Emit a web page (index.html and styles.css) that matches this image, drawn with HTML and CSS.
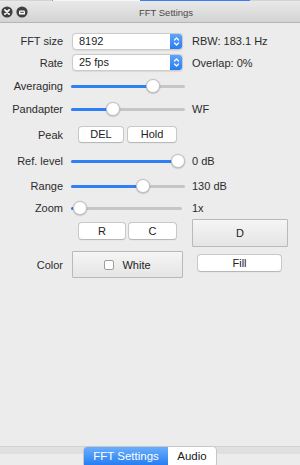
FILE: index.html
```html
<!DOCTYPE html>
<html>
<head>
<meta charset="utf-8">
<link rel="stylesheet" href="styles.css">
</head>
<body>
<div class="window">
  <div class="topstrip"><span class="ts-a"></span><span class="ts-b"></span><span class="ts-c"></span><span class="ts-d"></span></div>
  <div class="titlebar">
    <div class="tb-icons">
      <svg class="tb-icon" width="12" height="12" viewBox="0 0 12 12"><circle cx="6" cy="6" r="5.6" fill="#404040"/><path d="M3.9 3.9 L8.1 8.1 M8.1 3.9 L3.9 8.1" stroke="#fff" stroke-width="1.7" stroke-linecap="round"/></svg>
      <svg class="tb-icon" width="12" height="12" viewBox="0 0 12 12"><circle cx="6" cy="6" r="5.6" fill="#404040"/><rect x="3" y="4.6" width="6" height="4" rx="1.2" fill="#fff"/><rect x="4.2" y="5.8" width="3.6" height="1" fill="#404040"/></svg>
    </div>
    <div class="tb-title">FFT Settings</div>
  </div>

  <div class="panel">
    <div class="lbl">FFT size</div>
    <div class="select"><span class="select-text">8192</span><span class="stepper"><svg width="7" height="11" viewBox="0 0 7 11"><path d="M1.5 4 L3.5 2 L5.5 4 M1.5 7 L3.5 9 L5.5 7" stroke="#fff" stroke-width="1.2" fill="none" stroke-linecap="round" stroke-linejoin="round"/></svg></span></div>
    <div class="val">RBW: 183.1 Hz</div>

    <div class="lbl">Rate</div>
    <div class="select"><span class="select-text">25 fps</span><span class="stepper"><svg width="7" height="11" viewBox="0 0 7 11"><path d="M1.5 4 L3.5 2 L5.5 4 M1.5 7 L3.5 9 L5.5 7" stroke="#fff" stroke-width="1.2" fill="none" stroke-linecap="round" stroke-linejoin="round"/></svg></span></div>
    <div class="val">Overlap: 0%</div>

    <div class="lbl">Averaging</div>
    <div class="slider" style="--v:0.745"><span class="track"></span><span class="fill"></span><span class="knob"></span></div>
    <div class="val"></div>

    <div class="lbl">Pandapter</div>
    <div class="slider" style="--v:0.345"><span class="track"></span><span class="fill"></span><span class="knob"></span></div>
    <div class="val">WF</div>

    <div class="lbl">Peak</div>
    <div class="btn-pair">
      <div class="btn btn-del">DEL</div>
      <div class="btn btn-hold">Hold</div>
    </div>
    <div class="val"></div>

    <div class="lbl">Ref. level</div>
    <div class="slider" style="--v:1"><span class="track"></span><span class="fill"></span><span class="knob"></span></div>
    <div class="val">0 dB</div>

    <div class="lbl">Range</div>
    <div class="slider" style="--v:0.645"><span class="track"></span><span class="fill"></span><span class="knob"></span></div>
    <div class="val">130 dB</div>

    <div class="lbl">Zoom</div>
    <div class="slider slider-short" style="--v:0.02"><span class="track"></span><span class="fill"></span><span class="knob"></span></div>
    <div class="val">1x</div>

    <div class="lbl"></div>
    <div class="btn-pair top3">
      <div class="btn btn-r">R</div>
      <div class="btn btn-c">C</div>
    </div>
    <div class="sq-btn btn-d">D</div>

    <div class="lbl">Color</div>
    <div class="sq-btn btn-color"><span class="check"></span>White</div>
    <div class="btn btn-fill">Fill</div>
  </div>

  <div class="footer">
    <div class="segmented">
      <div class="seg seg-active">FFT Settings</div>
      <div class="seg">Audio</div>
    </div>
  </div>
</div>
</body>
</html>
```

FILE: styles.css
```css
html, body {
  margin: 0;
  padding: 0;
}
body {
  width: 300px;
  height: 465px;
  overflow: hidden;
  background: #ececec;
  font-family: "Liberation Sans", Arial, sans-serif;
  font-size: 11px;
  color: #262626;
}
.window {
  display: flex;
  flex-direction: column;
  height: 465px;
}
.topstrip {
  display: flex;
  height: 1px;
  flex: none;
}
.ts-a { width: 52px; background: #d4d4d4; border-right: 1px solid #9a9a9a; }
.ts-b { width: 87px; background: #f6f6f6; }
.ts-c { width: 110px; background: #3a80f3; }
.ts-d { flex: 1; background: #d4d4d4; }

.titlebar {
  flex: none;
  height: 21px;
  display: flex;
  align-items: center;
  background: linear-gradient(#e9e9e9, #d3d3d3);
  border-bottom: 1px solid #b6b6b6;
}
.tb-icons {
  width: 32px;
  display: flex;
  align-items: center;
  gap: 3px;
  padding-left: 1px;
  box-sizing: border-box;
}
.tb-icon { display: block; }
.tb-title {
  flex: 1;
  text-align: center;
  font-size: 9.5px;
  color: #4a4a4a;
  padding-top: 1px;
}

.panel {
  flex: 1;
  display: grid;
  grid-template-columns: 63px 114px 1fr;
  grid-template-rows: 20px 23px 23px 24px 27px 26px 23px 22px 29px 34px;
  column-gap: 8px;
  align-content: start;
  align-items: center;
  padding-top: 8px;
}
.panel > .val { padding-left: 0; }
.lbl {
  text-align: right;
  color: #2b2b2b;
}
.val {
  color: #2b2b2b;
  margin-left: -1px;
}

.select {
  display: flex;
  width: 111px;
  height: 17px;
  margin-left: 1px;
  box-sizing: border-box;
  border: 1px solid #cbcbcb;
  border-radius: 4px;
  background: #fff;
  overflow: hidden;
  box-shadow: 0 0.5px 1px rgba(0,0,0,0.08);
}
.select-text {
  flex: 1;
  padding-left: 6px;
  line-height: 15px;
  color: #1e1e1e;
}
.stepper {
  width: 12px;
  display: flex;
  align-items: center;
  justify-content: center;
  background: linear-gradient(#5ea5fb, #2a7df2);
}
.stepper svg { display: block; }

.slider {
  position: relative;
  width: 114px;
  height: 16px;
}
.slider .track {
  position: absolute;
  left: 0;
  right: 0;
  top: 7px;
  height: 3px;
  border-radius: 2px;
  background: #c6c6c6;
}
.slider-short .track { right: 3px; }
.slider .fill {
  position: absolute;
  left: 0;
  top: 7px;
  height: 3px;
  border-radius: 2px;
  width: calc(7px + var(--v) * 100px);
  background: #2f80f5;
}
.slider .knob {
  position: absolute;
  top: 1px;
  left: calc(var(--v) * 100px);
  width: 14px;
  height: 14px;
  box-sizing: border-box;
  border-radius: 50%;
  background: #fff;
  border: 0.5px solid #c2c2c2;
  box-shadow: 0 0.5px 1.5px rgba(0,0,0,0.3);
}

.btn-pair {
  display: flex;
  padding-left: 7px;
}
.top3 { align-self: start; margin-top: 3px; }
.btn {
  height: 17px;
  box-sizing: border-box;
  border: 1px solid #c8c8c8;
  border-bottom-color: #b8b8b8;
  border-radius: 4px;
  background: #fff;
  text-align: center;
  line-height: 15px;
  color: #222;
  box-shadow: 0 0.5px 0.5px rgba(0,0,0,0.05);
}
.btn-del { width: 46px; }
.btn-hold { width: 50px; margin-left: 3px; }
.btn-r { width: 48px; height: 18px; line-height: 16px; }
.btn-c { width: 49px; height: 18px; line-height: 16px; margin-left: 2px; }

.sq-btn {
  box-sizing: border-box;
  border: 1px solid #b9b9b9;
  border-radius: 1px;
  background: linear-gradient(#f5f5f5, #e5e5e5);
  display: flex;
  align-items: center;
  justify-content: center;
  color: #222;
}
.btn-d {
  align-self: start;
  width: 96px;
  height: 28px;
  margin-left: -1px;
}
.btn-color {
  align-self: start;
  margin-top: 3px;
  margin-left: 1px;
  width: 111px;
  height: 27px;
}
.check {
  width: 10px;
  height: 10px;
  box-sizing: border-box;
  border: 1px solid #9c9c9c;
  border-radius: 2px;
  background: #fff;
  margin-right: 8px;
}
.btn-fill {
  align-self: start;
  margin-top: 6px;
  margin-left: 4px;
  width: 85px;
  height: 18px;
  line-height: 16px;
}

.footer {
  flex: none;
  height: 18px;
  border-top: 1px solid #d3d3d3;
  background: linear-gradient(#e0e0e0 0, #e0e0e0 7px, #ececec 7px);
  display: flex;
  justify-content: center;
  align-items: flex-start;
}
.segmented {
  display: flex;
  margin-top: -1px;
  height: 20px;
  border-radius: 4px;
  border: 1px solid #c6c6c6;
  overflow: hidden;
  background: #fff;
  font-size: 11.5px;
}
.seg {
  line-height: 18px;
  text-align: center;
  color: #1a1a1a;
  width: 48px;
}
.seg-active {
  width: 84px;
  color: #fff;
  background: linear-gradient(#6aaefb, #1f79f1);
}
```
